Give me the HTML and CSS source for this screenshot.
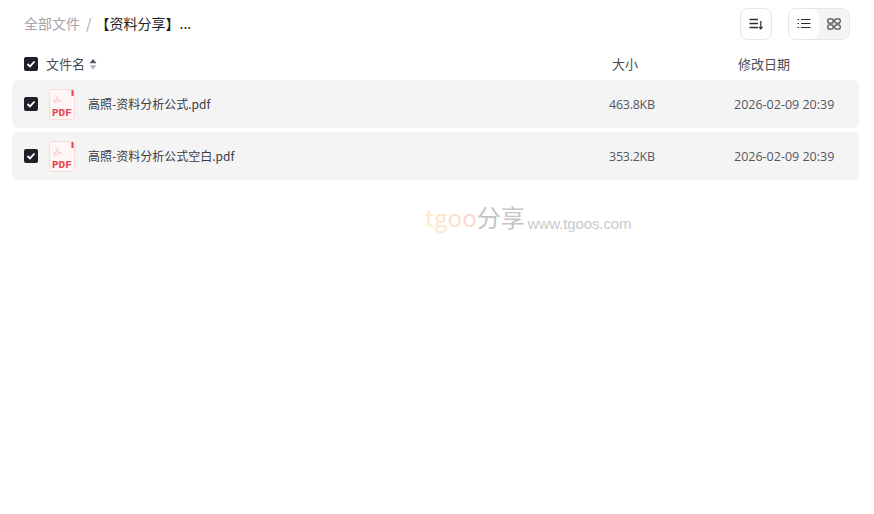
FILE: index.html
```html
<!DOCTYPE html>
<html lang="zh-CN">
<head>
    <meta charset="UTF-8">
    <title>全部文件</title>
    <link rel="stylesheet" href="styles.css">
</head>
<body>

    <div class="file-page">
        <!-- Top bar -->
        <div class="top-bar">
            <div class="crumbs">
                <a class="crumb-root" href="#">全部文件</a>
                <span class="crumb-sep">/</span>
                <span class="crumb-current">【资料分享】...</span>
            </div>
            <div class="tools">
                <button class="tool-btn" type="button">
                    <svg width="16" height="16" viewBox="0 0 16 16" fill="none" stroke="#2c2e36" stroke-width="1.3">
                        <path d="M1.500 3.500h8.500M1.500 7.500h8.500M1.500 11.500h8.500"/>
                        <path d="M12.800 5v7.500M11 10.800l1.800 2 1.800-2" stroke-width="1.200"/>
                    </svg>
                </button>
                <div class="view-switch">
                    <button class="view-btn active" type="button">
                        <svg width="16" height="16" viewBox="0 0 16 16" fill="none" stroke="#2c2e36" stroke-width="1.200">
                            <path d="M1.500 3.500h1.500M1.500 7.500h1.500M1.500 11.500h1.500M5 3.500h9.500M5 7.500h9.500M5 11.500h9.500"/>
                        </svg>
                    </button>
                    <button class="view-btn" type="button">
                        <svg width="16" height="16" viewBox="0 0 16 16" fill="none" stroke="#4a4c54" stroke-width="1.300">
                            <rect x="1.800" y="2.800" width="5.400" height="4.400" rx="1.600"/>
                            <rect x="8.800" y="2.800" width="5.400" height="4.400" rx="1.600"/>
                            <rect x="1.800" y="8.800" width="5.400" height="4.400" rx="1.600"/>
                            <rect x="8.800" y="8.800" width="5.400" height="4.400" rx="1.600"/>
                        </svg>
                    </button>
                </div>
            </div>
        </div>

        <!-- List header -->
        <div class="list-head">
            <span class="check"><svg width="10" height="8" viewBox="0 0 10 8" fill="none" stroke="#fff" stroke-width="1.8"><path d="M1.500 4l2.500 2.400L8.500 1.500"/></svg></span>
            <span class="col-name">文件名
                <svg class="sort-mark" width="8" height="12" viewBox="0 0 8 12"><path d="M4 1L7.500 5.200H.5z" fill="#55575f"/><path d="M4 11.500L.5 7.200h7z" fill="#b4b5b9"/></svg>
            </span>
            <span class="col-size">大小</span>
            <span class="col-date">修改日期</span>
        </div>

        <!-- Files -->
        <div class="file-row">
            <span class="check"><svg width="10" height="8" viewBox="0 0 10 8" fill="none" stroke="#fff" stroke-width="1.8"><path d="M1.500 4l2.500 2.400L8.500 1.500"/></svg></span>
            <svg class="pdf-icon" width="26" height="31" viewBox="0 0 26 31">
                <path d="M2.500.5h19l4 4v24a2 2 0 0 1-2 2h-21a2 2 0 0 1-2-2v-26a2 2 0 0 1 2-2z" fill="#fff6f6" stroke="#fbd9d9"/>
                <rect x="22.500" y="1" width="2" height="6" fill="#e8424c"/>
                <path d="M4 13c2-1 4-3 4.500-6.500M8 9c1 2 2.500 3 5 3.500M5 14l5-2" fill="none" stroke="#f9cccc" stroke-width="1.100"/>
                <text class="pdf-label" x="3" y="26.500">PDF</text>
            </svg>
            <span class="file-name">高照-资料分析公式.pdf</span>
            <span class="file-size">463.8KB</span>
            <span class="file-date">2026-02-09 20:39</span>
        </div>
        <div class="file-row">
            <span class="check"><svg width="10" height="8" viewBox="0 0 10 8" fill="none" stroke="#fff" stroke-width="1.8"><path d="M1.500 4l2.500 2.400L8.500 1.500"/></svg></span>
            <svg class="pdf-icon" width="26" height="31" viewBox="0 0 26 31">
                <path d="M2.500.5h19l4 4v24a2 2 0 0 1-2 2h-21a2 2 0 0 1-2-2v-26a2 2 0 0 1 2-2z" fill="#fff6f6" stroke="#fbd9d9"/>
                <rect x="22.500" y="1" width="2" height="6" fill="#e8424c"/>
                <path d="M4 13c2-1 4-3 4.500-6.500M8 9c1 2 2.500 3 5 3.500M5 14l5-2" fill="none" stroke="#f9cccc" stroke-width="1.100"/>
                <text class="pdf-label" x="3" y="26.500">PDF</text>
            </svg>
            <span class="file-name">高照-资料分析公式空白.pdf</span>
            <span class="file-size">353.2KB</span>
            <span class="file-date">2026-02-09 20:39</span>
        </div>

        <!-- Watermark over the page -->
        <div class="watermark"><span class="wm-t">t</span><span class="wm-g">g</span><span class="wm-o1">o</span><span class="wm-o2">o</span><span class="wm-cn">分享</span><span class="wm-url">www.tgoos.com</span></div>
    </div>

</body>
</html>
```

FILE: styles.css
```css
* {
    margin: 0;
    padding: 0;
    box-sizing: border-box;
    font-family: "Noto Sans CJK SC", "Noto Sans", sans-serif;
}

body {
    background-color: #fff;
    color: #3a3c44;
    font-size: 13px;
}

.file-page {
    position: relative;
    width: 874px;
    height: 514px;
    padding: 8px 15px 0 12px;
}

/* Top bar */
.top-bar {
    display: flex;
    justify-content: space-between;
    align-items: center;
    height: 32px;
    padding: 0 9px 0 12px;
}

.crumbs {
    display: flex;
    align-items: center;
    height: 30px;
    margin-bottom: 2px;
    font-size: 14px;
}

.crumb-root {
    color: #a3a4a8;
    text-decoration: none;
}

.crumb-sep {
    color: #a3a4a8;
    margin: 0 6px;
}

.crumb-current {
    color: #1c1e26;
    margin-left: -2px;
}

.tools {
    display: flex;
    gap: 16px;
}

.tool-btn,
.view-switch {
    height: 32px;
    background-color: #fff;
    border: 1px solid #e6e6e8;
    border-radius: 8px;
}

.tool-btn {
    display: flex;
    align-items: center;
    justify-content: center;
    width: 32px;
}

.view-switch {
    display: flex;
    width: 62px;
    overflow: hidden;
    background-color: #f4f4f5;
}

.view-btn {
    display: flex;
    align-items: center;
    justify-content: center;
    flex: 1;
    border: none;
    background: none;
}

.view-btn.active {
    background-color: #fff;
    border-radius: 0 8px 8px 0;
}

/* List */
.list-head {
    display: grid;
    grid-template-columns: 14px 1fr 126px 121px;
    align-items: center;
    height: 32px;
    margin-top: 8px;
    padding-left: 12px;
    color: #4a4c54;
}

.list-head .col-name,
.list-head .col-size,
.list-head .col-date {
    height: 20px;
    line-height: 20px;
}

.check {
    display: flex;
    align-items: center;
    justify-content: center;
    width: 14px;
    height: 14px;
    background-color: #1f2027;
    border-radius: 2px;
}

.col-name {
    display: flex;
    align-items: center;
    gap: 4px;
    margin-left: 8px;
}

.file-row {
    display: grid;
    grid-template-columns: 14px 28px 1fr 125px 125px;
    align-items: center;
    height: 48px;
    margin-bottom: 4px;
    padding-left: 12px;
    background-color: #f4f4f5;
    border-radius: 6px;
}

.pdf-icon {
    margin-left: 11px;
}

.pdf-label {
    font-family: "Liberation Mono", monospace;
    font-size: 11px;
    font-weight: 700;
    fill: #e8424c;
}

.file-name {
    height: 20px;
    line-height: 20px;
    margin-left: 22px;
    font-size: 12px;
}

.file-size,
.file-date {
    font-family: "Open Sans", sans-serif;
    font-size: 12.500px;
    color: #55575f;
}

.file-size {
    letter-spacing: -0.25px;
}

/* Watermark */
.watermark {
    position: absolute;
    top: 199px;
    left: 425px;
    display: flex;
    align-items: baseline;
    white-space: nowrap;
    font-size: 24px;
}

.wm-t { color: #fdecc4; }
.wm-g { color: #fde6c6; }
.wm-o1 { color: #fddfce; }
.wm-o2 { color: #fdd6d0; }
.wm-cn { color: #c4c4c4; }

.wm-url {
    margin-left: 3px;
    transform: translateY(2px);
    font-family: "Liberation Sans", sans-serif;
    font-size: 15px;
    color: #cacaca;
    letter-spacing: -0.1px;
}
```
